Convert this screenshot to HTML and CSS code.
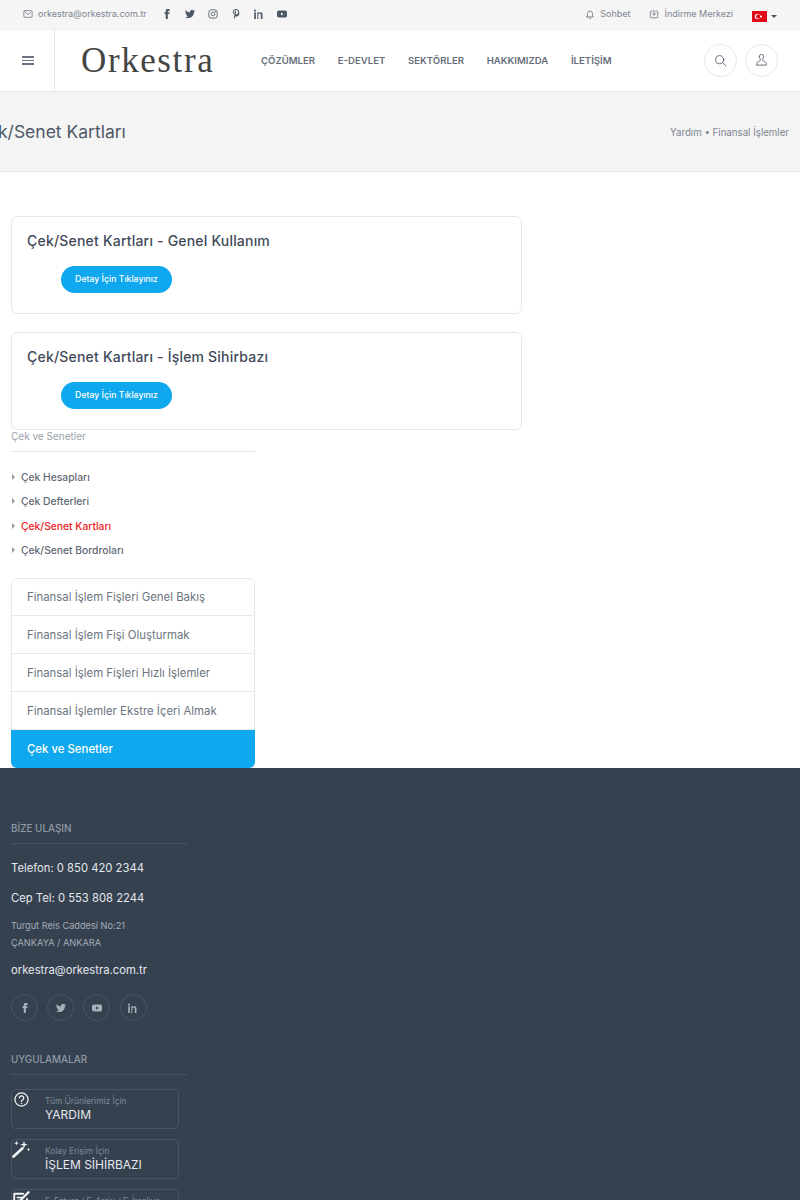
FILE: index.html
```html
<!DOCTYPE html>
<html lang="tr">
<head>
    <meta charset="UTF-8">
    <title>Çek/Senet Kartları</title>
    <meta name="viewport" content="width=device-width, initial-scale=1.0">
    <link rel="stylesheet" href="styles.css">
</head>
<body>

<!-- Icon set -->
<svg class="icon-defs" width="0" height="0">
    <symbol id="i-facebook" viewBox="0 0 24 24"><path d="M9 8H6v4h3v12h5V12h3.6l.4-4h-4V6.3c0-1 .2-1.3 1.1-1.3H18V0h-3.8C10.6 0 9 1.6 9 4.6z"/></symbol>
    <symbol id="i-twitter" viewBox="0 0 24 24"><path d="M24 4.56c-.89.39-1.84.65-2.83.77a4.93 4.93 0 0 0 2.17-2.72c-.95.56-2 .97-3.13 1.19A4.92 4.92 0 0 0 11.8 8.29C7.72 8.09 4.1 6.13 1.67 3.15a4.93 4.93 0 0 0 1.52 6.57c-.8-.03-1.56-.25-2.23-.62v.06a4.93 4.93 0 0 0 3.95 4.83c-.72.2-1.48.22-2.22.08a4.93 4.93 0 0 0 4.6 3.42A9.87 9.87 0 0 1 0 19.54a13.94 13.94 0 0 0 7.55 2.21c9.06 0 14.01-7.5 14.01-14.01 0-.21 0-.42-.01-.63A10 10 0 0 0 24 4.56z"/></symbol>
    <symbol id="i-instagram" viewBox="0 0 24 24"><rect x="2" y="2" width="20" height="20" rx="5.5" fill="none" stroke="currentColor" stroke-width="2"/><circle cx="12" cy="12" r="4.5" fill="none" stroke="currentColor" stroke-width="2"/><circle cx="17.8" cy="6.2" r="1.3"/></symbol>
    <symbol id="i-pinterest" viewBox="0 0 24 24"><path d="M12.3 0C7 0 4 3.5 4 7.4c0 1.8 1 4 2.5 4.7.4.2.4 0 .6-1 .1-.3 0-.5-.2-.8-.5-.6-.9-1.6-.9-2.7 0-2.7 2.1-5.4 5.7-5.4 3.1 0 5.3 2.1 5.3 5.1 0 3.4-1.7 5.7-4 5.7-1.2 0-2.2-1-1.9-2.3.4-1.5 1.1-3.1 1.1-4.2 0-1-.5-1.8-1.6-1.8-1.3 0-2.3 1.3-2.3 3.1 0 1.1.4 1.9.4 1.9L7.2 20c-.4 1.6 0 4 0 4 0 .1.2.2.3 0 .2-.2 1.8-2.6 2.3-4.2l.8-3.3c.4.8 1.6 1.5 2.9 1.5 3.8 0 6.5-3.4 6.5-7.7C20 4 16.7 0 12.3 0z"/></symbol>
    <symbol id="i-linkedin" viewBox="0 0 24 24"><path d="M4.98 3.5a2.5 2.5 0 1 1-5 0 2.5 2.5 0 0 1 5 0zM.5 8h4v16h-4zM8 8h3.8v2.2h.05c.53-1 1.83-2.2 3.77-2.2 4.03 0 4.78 2.65 4.78 6.1V24h-4v-8.5c0-2-.04-4.6-2.8-4.6-2.8 0-3.2 2.2-3.2 4.4V24H8z"/></symbol>
    <symbol id="i-youtube" viewBox="0 0 24 24"><path fill-rule="evenodd" d="M23.5 6.2a3 3 0 0 0-2.1-2.1C19.5 3.5 12 3.5 12 3.5s-7.5 0-9.4.6A3 3 0 0 0 .5 6.2 31 31 0 0 0 0 12a31 31 0 0 0 .5 5.8 3 3 0 0 0 2.1 2.1c1.9.6 9.4.6 9.4.6s7.5 0 9.4-.6a3 3 0 0 0 2.1-2.1A31 31 0 0 0 24 12a31 31 0 0 0-.5-5.8zM9.6 15.6V8.4l6.2 3.6z"/></symbol>
</svg>

<!-- Top bar -->
<div class="topbar">
    <div class="topbar-left">
        <svg class="line-icon mail-icon" viewBox="0 0 24 24"><rect x="2" y="4" width="20" height="16" rx="3"/><path d="M6 9l6 4 6-4"/></svg>
        <span class="topbar-mail">orkestra@orkestra.com.tr</span>
        <div class="topbar-social">
            <svg class="brand"><use href="#i-facebook"/></svg>
            <svg class="brand"><use href="#i-twitter"/></svg>
            <svg class="brand"><use href="#i-instagram"/></svg>
            <svg class="brand"><use href="#i-pinterest"/></svg>
            <svg class="brand"><use href="#i-linkedin"/></svg>
            <svg class="brand"><use href="#i-youtube"/></svg>
        </div>
    </div>
    <div class="topbar-right">
        <a class="topbar-link" href="#">
            <svg class="line-icon" viewBox="0 0 24 24"><path d="M6 17V11a6 6 0 0 1 12 0v6l2 2H4z"/><path d="M10 22h4"/></svg>
            Sohbet
        </a>
        <a class="topbar-link" href="#">
            <svg class="line-icon" viewBox="0 0 24 24"><path d="M8 5H5a2 2 0 0 0-2 2v12a2 2 0 0 0 2 2h14a2 2 0 0 0 2-2V7a2 2 0 0 0-2-2h-3"/><path d="M12 3v11M8 11l4 4 4-4"/></svg>
            İndirme Merkezi
        </a>
        <div class="lang">
            <svg class="flag" viewBox="0 0 15 11"><rect width="15" height="11" fill="#e30a17"/><circle cx="5.6" cy="5.5" r="2.8" fill="#fff"/><circle cx="6.3" cy="5.5" r="2.2" fill="#e30a17"/><circle cx="9" cy="5.5" r="1" fill="#fff"/></svg>
            <span class="caret"></span>
        </div>
    </div>
</div>

<!-- Header -->
<header class="header">
    <div class="burger">
        <span></span><span></span><span></span>
    </div>
    <a class="logo" href="#">Orkestra</a>
    <nav class="nav">
        <a href="#">ÇÖZÜMLER</a>
        <a href="#">E-DEVLET</a>
        <a href="#">SEKTÖRLER</a>
        <a href="#">HAKKIMIZDA</a>
        <a href="#">İLETİŞİM</a>
    </nav>
    <div class="header-btns">
        <button class="round-btn"><svg class="line-icon" viewBox="0 0 24 24"><circle cx="10.5" cy="10.5" r="7.5"/><path d="M16 16l6 6"/></svg></button>
        <button class="round-btn"><svg class="line-icon" viewBox="0 0 24 24"><path d="M8 4.5a4 4 0 0 1 8 0c0 3-2 4-2 7 0 2 7 2.5 7 6v3H3v-3c0-3.5 7-4 7-6 0-3-2-4-2-7z"/></svg></button>
    </div>
</header>

<!-- Page title -->
<div class="page-title">
    <h1>Çek/Senet Kartları</h1>
    <div class="crumbs">Yardım • Finansal İşlemler</div>
</div>

<!-- Main content -->
<div class="content">
    <div class="card">
        <h3>Çek/Senet Kartları - Genel Kullanım</h3>
        <a class="pill" href="#">Detay İçin Tıklayınız</a>
    </div>
    <div class="card">
        <h3>Çek/Senet Kartları - İşlem Sihirbazı</h3>
        <a class="pill" href="#">Detay İçin Tıklayınız</a>
    </div>

    <div class="side">
        <div class="side-title">Çek ve Senetler</div>
        <ul class="side-list">
            <li>Çek Hesapları</li>
            <li>Çek Defterleri</li>
            <li class="current">Çek/Senet Kartları</li>
            <li>Çek/Senet Bordroları</li>
        </ul>
        <div class="side-menu">
            <a href="#">Finansal İşlem Fişleri Genel Bakış</a>
            <a href="#">Finansal İşlem Fişi Oluşturmak</a>
            <a href="#">Finansal İşlem Fişleri Hızlı İşlemler</a>
            <a href="#">Finansal İşlemler Ekstre İçeri Almak</a>
            <a class="active" href="#">Çek ve Senetler</a>
        </div>
    </div>
</div>

<!-- Footer -->
<footer class="footer">
    <div class="foot-col">
        <h4>BİZE ULAŞIN</h4>
        <p class="foot-phone">Telefon: 0 850 420 2344</p>
        <p class="foot-phone">Cep Tel: 0 553 808 2244</p>
        <p class="foot-addr">Turgut Reis Caddesi No:21<br>ÇANKAYA / ANKARA</p>
        <p class="foot-mail">orkestra@orkestra.com.tr</p>
        <div class="foot-social">
            <a href="#"><svg class="brand"><use href="#i-facebook"/></svg></a>
            <a href="#"><svg class="brand"><use href="#i-twitter"/></svg></a>
            <a href="#"><svg class="brand"><use href="#i-youtube"/></svg></a>
            <a href="#"><svg class="brand"><use href="#i-linkedin"/></svg></a>
        </div>

        <h4 class="apps-title">UYGULAMALAR</h4>
        <a class="app" href="#">
            <svg class="app-icon" viewBox="0 0 24 24"><circle cx="12" cy="12" r="10.5"/><path d="M8.5 9.5a3.5 3.5 0 1 1 5.5 3c-1.3.8-2 1.4-2 2.5"/><circle class="dot" cx="12" cy="18.5" r="1.2"/></svg>
            <span class="app-small">Tüm Ürünlerimiz İçin</span>
            <span class="app-big">YARDIM</span>
        </a>
        <a class="app" href="#">
            <svg class="app-icon icon-wide" viewBox="0 0 24 24"><path d="M2 22L14 11" stroke-width="3.5"/><path class="dot" d="M16 1l1.2 4 4 1.2-4 1.200-1.200 4-1.200-4-4-1.200 4-1.200zM6 1l.8 2.400 2.400.8-2.400.8L6 7.400l-.8-2.400-2.400-.8 2.400-.8zM22 10l.7 2 1.300.6-1.300.6-.7 2-.7-2-1.300-.6 1.300-.6z"/></svg>
            <span class="app-small">Kolay Erişim İçin</span>
            <span class="app-big">İŞLEM SİHİRBAZI</span>
        </a>
        <a class="app" href="#">
            <svg class="app-icon icon-wide" viewBox="0 0 24 24"><path d="M20 12v9H3V5h12" stroke-width="2.5"/><path d="M7 10h7M7 14h5M7 18h8" stroke-width="2"/><path d="M11 14L22 3" stroke-width="3"/></svg>
            <span class="app-small">E-Fatura / E-Arşiv / E-İrsaliye</span>
            <span class="app-big">E-DÖNÜŞÜM</span>
        </a>
    </div>
</footer>

</body>
</html>
```

FILE: styles.css
```css
* {
    box-sizing: border-box;
}

html, body {
    height: 1200px;
    overflow: hidden;
}

body {
    margin: 0;
    font-family: 'Inter', 'Noto Sans', sans-serif;
    background-color: #ffffff;
    color: #4d5866;
}

a {
    color: inherit;
    text-decoration: none;
}

.icon-defs {
    position: absolute;
}

.line-icon {
    width: 13px;
    height: 13px;
    fill: none;
    stroke: currentColor;
    stroke-width: 1.7;
    stroke-linecap: round;
    stroke-linejoin: round;
    flex: none;
}

.brand {
    width: 10px;
    height: 10px;
    fill: currentColor;
    flex: none;
}

/* Top bar */
.topbar {
    height: 30px;
    background-color: #f5f5f5;
    border-bottom: 1px solid #ececec;
    display: flex;
    align-items: center;
    justify-content: space-between;
    padding: 0 23px 2px 23px;
    font-size: 9px;
    color: #7d8591;
}

.topbar-left,
.topbar-right {
    display: flex;
    align-items: center;
}

.mail-icon {
    width: 10px;
    height: 10px;
    margin-right: 5px;
    color: #5c6673;
}

.topbar-social {
    display: flex;
    align-items: center;
    gap: 13px;
    margin-left: 15px;
    color: #4d5866;
}

.topbar-link {
    display: flex;
    align-items: center;
    gap: 5px;
    margin-right: 19px;
}

.topbar-link .line-icon {
    width: 10px;
    height: 10px;
    color: #5c6673;
}

.lang {
    display: flex;
    align-items: center;
    margin-top: 5px;
}

.flag {
    width: 15px;
    height: 11px;
}

.caret {
    margin-left: 4px;
    border-top: 3px solid #555;
    border-left: 3px solid transparent;
    border-right: 3px solid transparent;
}

/* Header */
.header {
    height: 62px;
    background-color: #ffffff;
    border-bottom: 1px solid #e6e6e6;
    display: flex;
    align-items: center;
}

.burger {
    width: 55px;
    height: 100%;
    border-right: 1px solid #e6e6e6;
    display: flex;
    flex-direction: column;
    justify-content: center;
    gap: 2px;
    padding-left: 22px;
}

.burger span {
    display: block;
    width: 12px;
    height: 1.5px;
    background-color: #6a7480;
}

.logo {
    margin-left: 26px;
    width: 180px;
    font-family: 'Liberation Serif', serif;
    font-size: 35px;
    letter-spacing: 1.6px;
    color: #444;
}

.nav {
    display: flex;
    gap: 22.7px;
    font-size: 9.6px;
    font-weight: 600;
    color: #666f7b;
}

.header-btns {
    margin-left: auto;
    display: flex;
    gap: 8px;
    padding-right: 22px;
}

.round-btn {
    width: 33px;
    height: 33px;
    padding: 0;
    border: 1px solid #e8e8ec;
    border-radius: 50%;
    background: #fff;
    color: #5c6673;
    display: flex;
    align-items: center;
    justify-content: center;
}

/* Page title */
.page-title {
    height: 80px;
    background-color: #f4f4f4;
    border-bottom: 1px solid #e8e8e8;
    display: flex;
    align-items: center;
    justify-content: space-between;
    padding-right: 11px;
}

.page-title h1 {
    margin: 0 0 0 -25px;
    font-size: 17.5px;
    font-weight: 400;
    color: #4d5866;
    white-space: nowrap;
}

.crumbs {
    margin-top: 1px;
    font-size: 9.7px;
    color: #7d8591;
}

/* Content */
.content {
    height: 596px;
    padding: 44px 0 0 11px;
}

.card {
    width: 511px;
    height: 98px;
    border: 1px solid #e8e8e8;
    border-radius: 6px;
    padding: 15px 15px;
    margin-bottom: 18px;
}

.card h3 {
    margin: 0 0 16px 0;
    font-size: 14px;
    font-weight: 500;
    letter-spacing: 0.2px;
    color: #3f4a58;
    line-height: 18px;
}

.pill {
    display: inline-block;
    margin-left: 34px;
    width: 111px;
    height: 27px;
    line-height: 27px;
    text-align: center;
    background-color: #0fa7ee;
    color: #fff;
    border-radius: 14px;
    font-size: 8.7px;
    font-weight: 500;
}

.side {
    width: 244px;
    margin-top: -18px;
}

.side-title {
    height: 22px;
    border-bottom: 1px solid #e6e6e6;
    font-size: 10px;
    line-height: 13px;
    color: #9aa1ab;
}

.side-list {
    list-style: none;
    margin: 0;
    padding: 13px 0 0 0;
}

.side-list li {
    position: relative;
    height: 24.4px;
    line-height: 24.4px;
    padding-left: 10px;
    font-size: 10.3px;
    font-weight: 500;
    color: #5f6874;
}

.side-list li::before {
    content: "";
    position: absolute;
    left: 1px;
    top: 9px;
    border-left: 3.5px solid #9a9a9a;
    border-top: 3px solid transparent;
    border-bottom: 3px solid transparent;
}

.side-list .current {
    color: #f01a24;
}

.side-menu {
    margin-top: 15px;
    border-radius: 6px;
    overflow: hidden;
}

.side-menu a {
    display: block;
    height: 38px;
    line-height: 39px;
    padding-left: 15px;
    border: 1px solid #e8e8e8;
    border-top: 0;
    font-size: 11.4px;
    color: #6b7480;
}

.side-menu a:first-child {
    border-top: 1px solid #e8e8e8;
    border-radius: 6px 6px 0 0;
    line-height: 37px;
}

.side-menu a.active {
    padding-left: 16px;
    border: 0;
    line-height: 38px;
    background-color: #0fa7ee;
    color: #fff;
    font-weight: 500;
}

/* Footer */
.footer {
    height: 440px;
    background-color: #364150;
    padding: 53px 0 0 11px;
}

.foot-col {
    width: 177px;
}

.footer h4 {
    margin: 0;
    height: 23px;
    line-height: 14px;
    border-bottom: 1px solid #465160;
    font-size: 9.9px;
    font-weight: 500;
    color: #8f98a5;
}

.foot-phone {
    margin: 16px 0 0 0;
    height: 16px;
    line-height: 16px;
    font-size: 11.25px;
    color: #e4e7eb;
}

.foot-phone + .foot-phone {
    margin-top: 14px;
}

.foot-addr {
    margin: 12px 0 0 0;
    font-size: 9.2px;
    line-height: 16.5px;
    color: #a4abb5;
}

.foot-mail {
    margin: 11px 0 0 0;
    height: 16px;
    line-height: 16px;
    font-size: 11.25px;
    color: #e4e7eb;
}

.foot-social {
    display: flex;
    gap: 9.2px;
    margin-top: 16px;
}

.foot-social a {
    width: 27px;
    height: 27px;
    border: 1px solid #4a5564;
    border-radius: 50%;
    display: flex;
    align-items: center;
    justify-content: center;
    color: #a9b0ba;
}

.footer .apps-title {
    margin-top: 31px;
    margin-bottom: 14px;
}

.app {
    position: relative;
    display: block;
    width: 168px;
    height: 40px;
    margin-bottom: 10px;
    padding: 5.5px 0 0 33px;
    border: 1px solid #4a5564;
    border-radius: 5px;
}

.app-icon {
    position: absolute;
    left: 2px;
    top: 2px;
    width: 15px;
    height: 15px;
    fill: none;
    stroke: #f2f3f5;
    stroke-width: 2;
    stroke-linecap: round;
    stroke-linejoin: round;
}

.app-icon.icon-wide {
    left: 0;
    top: 0;
    width: 18px;
    height: 18px;
}

.app-icon .dot {
    fill: #f2f3f5;
    stroke: none;
}

.app-small {
    display: block;
    font-size: 8.4px;
    line-height: 11px;
    color: #7f8996;
}

.app-big {
    display: block;
    font-size: 12px;
    line-height: 16px;
    color: #e4e7eb;
}
```
